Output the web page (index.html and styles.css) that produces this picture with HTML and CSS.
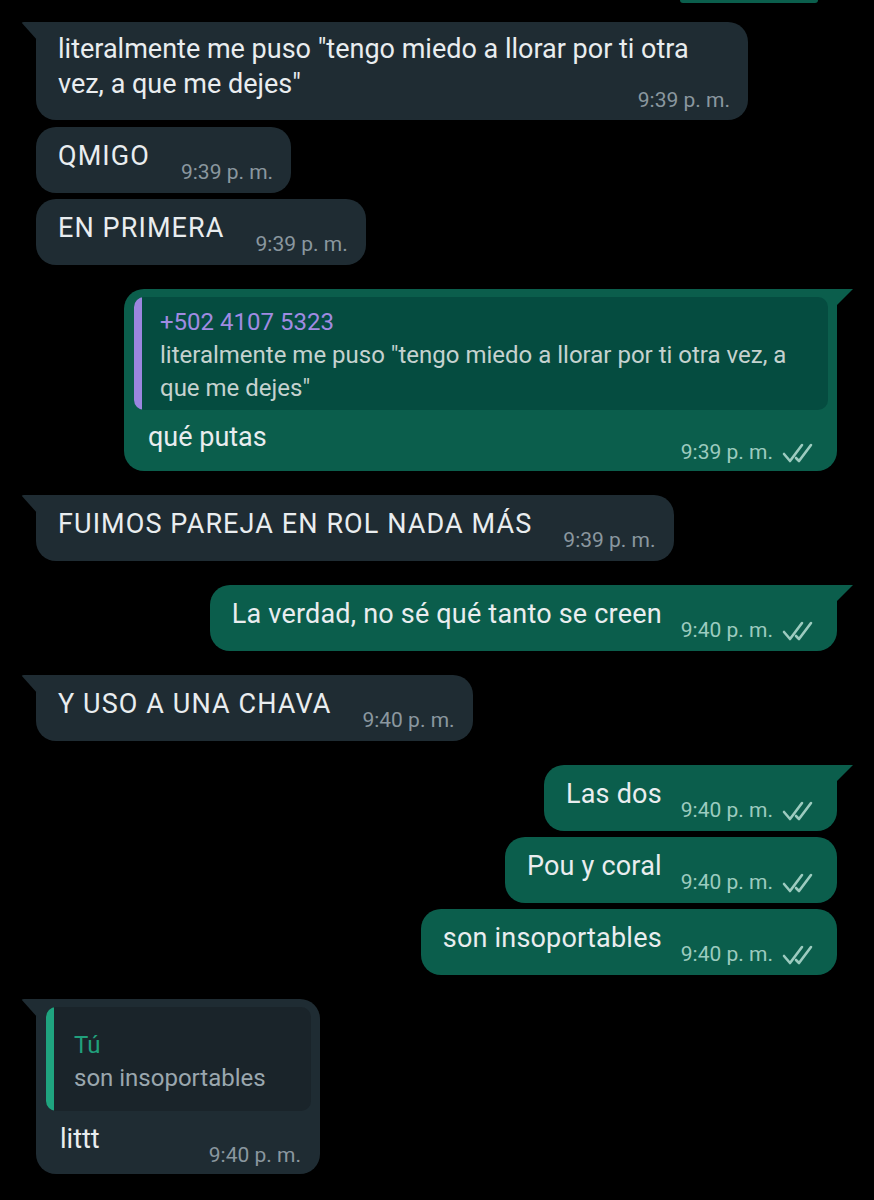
FILE: index.html
```html
<!DOCTYPE html>
<html lang="es">
<head>
<meta charset="utf-8">
<link rel="stylesheet" href="styles.css">
</head>
<body>
<div class="chat">
  <div class="prev"></div>

  <div class="row in first">
    <div class="bubble wide">
      <span class="text">literalmente me puso "tengo miedo a llorar por ti otra vez, a que me dejes"</span>
      <span class="meta">9:39 p. m.</span>
    </div>
  </div>
  <div class="row in next">
    <div class="bubble line caps">
      <div class="text">QMIGO</div>
      <div class="meta">9:39 p. m.</div>
    </div>
  </div>
  <div class="row in">
    <div class="bubble line caps">
      <div class="text">EN PRIMERA</div>
      <div class="meta">9:39 p. m.</div>
    </div>
  </div>

  <div class="row out first gapbig">
    <div class="bubble reply">
      <div class="quote purple">
        <div class="qname">+502 4107 5323</div>
        <div class="qtext">literalmente me puso "tengo miedo a llorar por ti otra vez, a que me dejes"</div>
      </div>
      <div class="line body">
        <div class="text">qué putas</div>
        <div class="meta">9:39 p. m. <svg class="ticks" viewBox="0 0 36 22"><polyline points="2,13 8,20 20,4"/><polyline points="14,17 17,20 29,4"/></svg></div>
      </div>
    </div>
  </div>

  <div class="row in first gapbig">
    <div class="bubble line caps">
      <div class="text">FUIMOS PAREJA EN ROL NADA MÁS</div>
      <div class="meta">9:39 p. m.</div>
    </div>
  </div>

  <div class="row out first gapbig">
    <div class="bubble line">
      <div class="text">La verdad, no sé qué tanto se creen</div>
      <div class="meta">9:40 p. m. <svg class="ticks" viewBox="0 0 36 22"><polyline points="2,13 8,20 20,4"/><polyline points="14,17 17,20 29,4"/></svg></div>
    </div>
  </div>

  <div class="row in first gapbig">
    <div class="bubble line caps">
      <div class="text">Y USO A UNA CHAVA</div>
      <div class="meta">9:40 p. m.</div>
    </div>
  </div>

  <div class="row out first gapbig">
    <div class="bubble line">
      <div class="text">Las dos</div>
      <div class="meta">9:40 p. m. <svg class="ticks" viewBox="0 0 36 22"><polyline points="2,13 8,20 20,4"/><polyline points="14,17 17,20 29,4"/></svg></div>
    </div>
  </div>
  <div class="row out">
    <div class="bubble line">
      <div class="text">Pou y coral</div>
      <div class="meta">9:40 p. m. <svg class="ticks" viewBox="0 0 36 22"><polyline points="2,13 8,20 20,4"/><polyline points="14,17 17,20 29,4"/></svg></div>
    </div>
  </div>
  <div class="row out">
    <div class="bubble line">
      <div class="text">son insoportables</div>
      <div class="meta">9:40 p. m. <svg class="ticks" viewBox="0 0 36 22"><polyline points="2,13 8,20 20,4"/><polyline points="14,17 17,20 29,4"/></svg></div>
    </div>
  </div>

  <div class="row in first gapbig">
    <div class="bubble reply small">
      <div class="quote green">
        <div class="qname">Tú</div>
        <div class="qtext">son insoportables</div>
      </div>
      <div class="line body">
        <div class="text">littt</div>
        <div class="meta">9:40 p. m.</div>
      </div>
    </div>
  </div>
</div>
</body>
</html>
```

FILE: styles.css
```css
html, body {
  margin: 0;
  padding: 0;
  background: #000;
}
body {
  width: 874px;
  height: 1200px;
  overflow: hidden;
  font-family: Roboto, "Noto Sans", sans-serif;
  color: #e9edef;
}
.chat {
  display: flex;
  flex-direction: column;
  gap: 6px;
  padding: 0 37px 0 36px;
}
.prev {
  align-self: flex-end;
  width: 138px;
  height: 3px;
  margin-right: 19px;
  margin-bottom: 13px;
  background: #0b5e4c;
  border-radius: 0 0 12px 12px;
}
.row {
  display: flex;
}
.row.next {
  margin-top: 1px;
}
.row.gapbig {
  margin-top: 18px;
}
.row.in { justify-content: flex-start; }
.row.out { justify-content: flex-end; }

.bubble {
  position: relative;
  border-radius: 20px;
  font-size: 27px;
  line-height: 35px;
}
.in .bubble { background: #1f2c33; }
.out .bubble { background: #0b5e4c; }

.row.in.first .bubble { border-top-left-radius: 0; }
.row.out.first .bubble { border-top-right-radius: 0; }
.row.in.first .bubble::before {
  content: "";
  position: absolute;
  top: 0;
  left: -15px;
  width: 17px;
  height: 19px;
  background: #1f2c33;
  clip-path: polygon(0 0, 100% 0, 100% 100%);
  border-top-left-radius: 3px;
}
.row.out.first .bubble::before {
  content: "";
  position: absolute;
  top: 0;
  right: -16px;
  width: 18px;
  height: 18px;
  background: #0b5e4c;
  clip-path: polygon(0 0, 100% 0, 0 100%);
}

.line {
  display: flex;
  align-items: flex-start;
  gap: 19px;
}
.in .line { gap: 31px; }
.bubble.line {
  padding: 12px 19px 0 22px;
  height: 66px;
  box-sizing: border-box;
}
.in .bubble.line { padding-right: 18px; }
.caps .text {
  letter-spacing: 1.1px;
}
.out .bubble.line .text {
  letter-spacing: 0.2px;
}
.text {
  white-space: nowrap;
}
.meta {
  display: flex;
  align-items: center;
  gap: 9px;
  font-size: 21px;
  line-height: 24px;
  color: #8a979f;
  white-space: nowrap;
  margin-top: 21px;
}
.out .meta { color: #9ccbbf; }
.ticks {
  width: 36px;
  height: 22px;
  fill: none;
  stroke: #9ccbbf;
  stroke-width: 2.6;
  stroke-linecap: round;
  stroke-linejoin: round;
}

/* wide first bubble: text flows, time floats at the end of the last line */
.bubble.wide {
  display: flow-root;
  width: 712px;
  box-sizing: border-box;
  padding: 10px 18px 8px 22px;
}
.bubble.wide .text {
  white-space: normal;
}
.bubble.wide .meta {
  display: block;
  float: right;
  margin-top: 21px;
}

/* reply bubbles */
.bubble.reply {
  padding: 8px 9px 7px 10px;
}
.out .bubble.reply { width: 713px; box-sizing: border-box; }
.quote {
  border-radius: 10px;
  padding: 9px 20px 5px 26px;
  position: relative;
  overflow: hidden;
}
.quote::before {
  content: "";
  position: absolute;
  left: 0;
  top: 0;
  bottom: 0;
  width: 8px;
}
.quote.purple { background: #054c40; }
.quote.purple::before { background: #9b86e0; }
.quote.green { background: #1a242a; padding: 22px 20px 16px 28px; }
.quote.green::before { background: #1fa47f; }
.qname {
  font-size: 24px;
  line-height: 33px;
}
.purple .qname { color: #a08be2; }
.green .qname { color: #21a07c; }
.qtext {
  font-size: 24px;
  line-height: 33px;
  color: #c5d2cf;
}
.green .qtext { color: #9aa7ae; }
.line.body {
  padding: 10px 10px 0 14px;
  height: 54px;
  box-sizing: border-box;
  justify-content: space-between;
}
.line.body .meta { margin-top: 20px; }
.bubble.small {
  width: 284px;
  box-sizing: border-box;
}
.bubble.small .line.body { padding-top: 11px; height: 56px; }
.bubble.small .line.body .meta { margin-top: 21px; }
```
